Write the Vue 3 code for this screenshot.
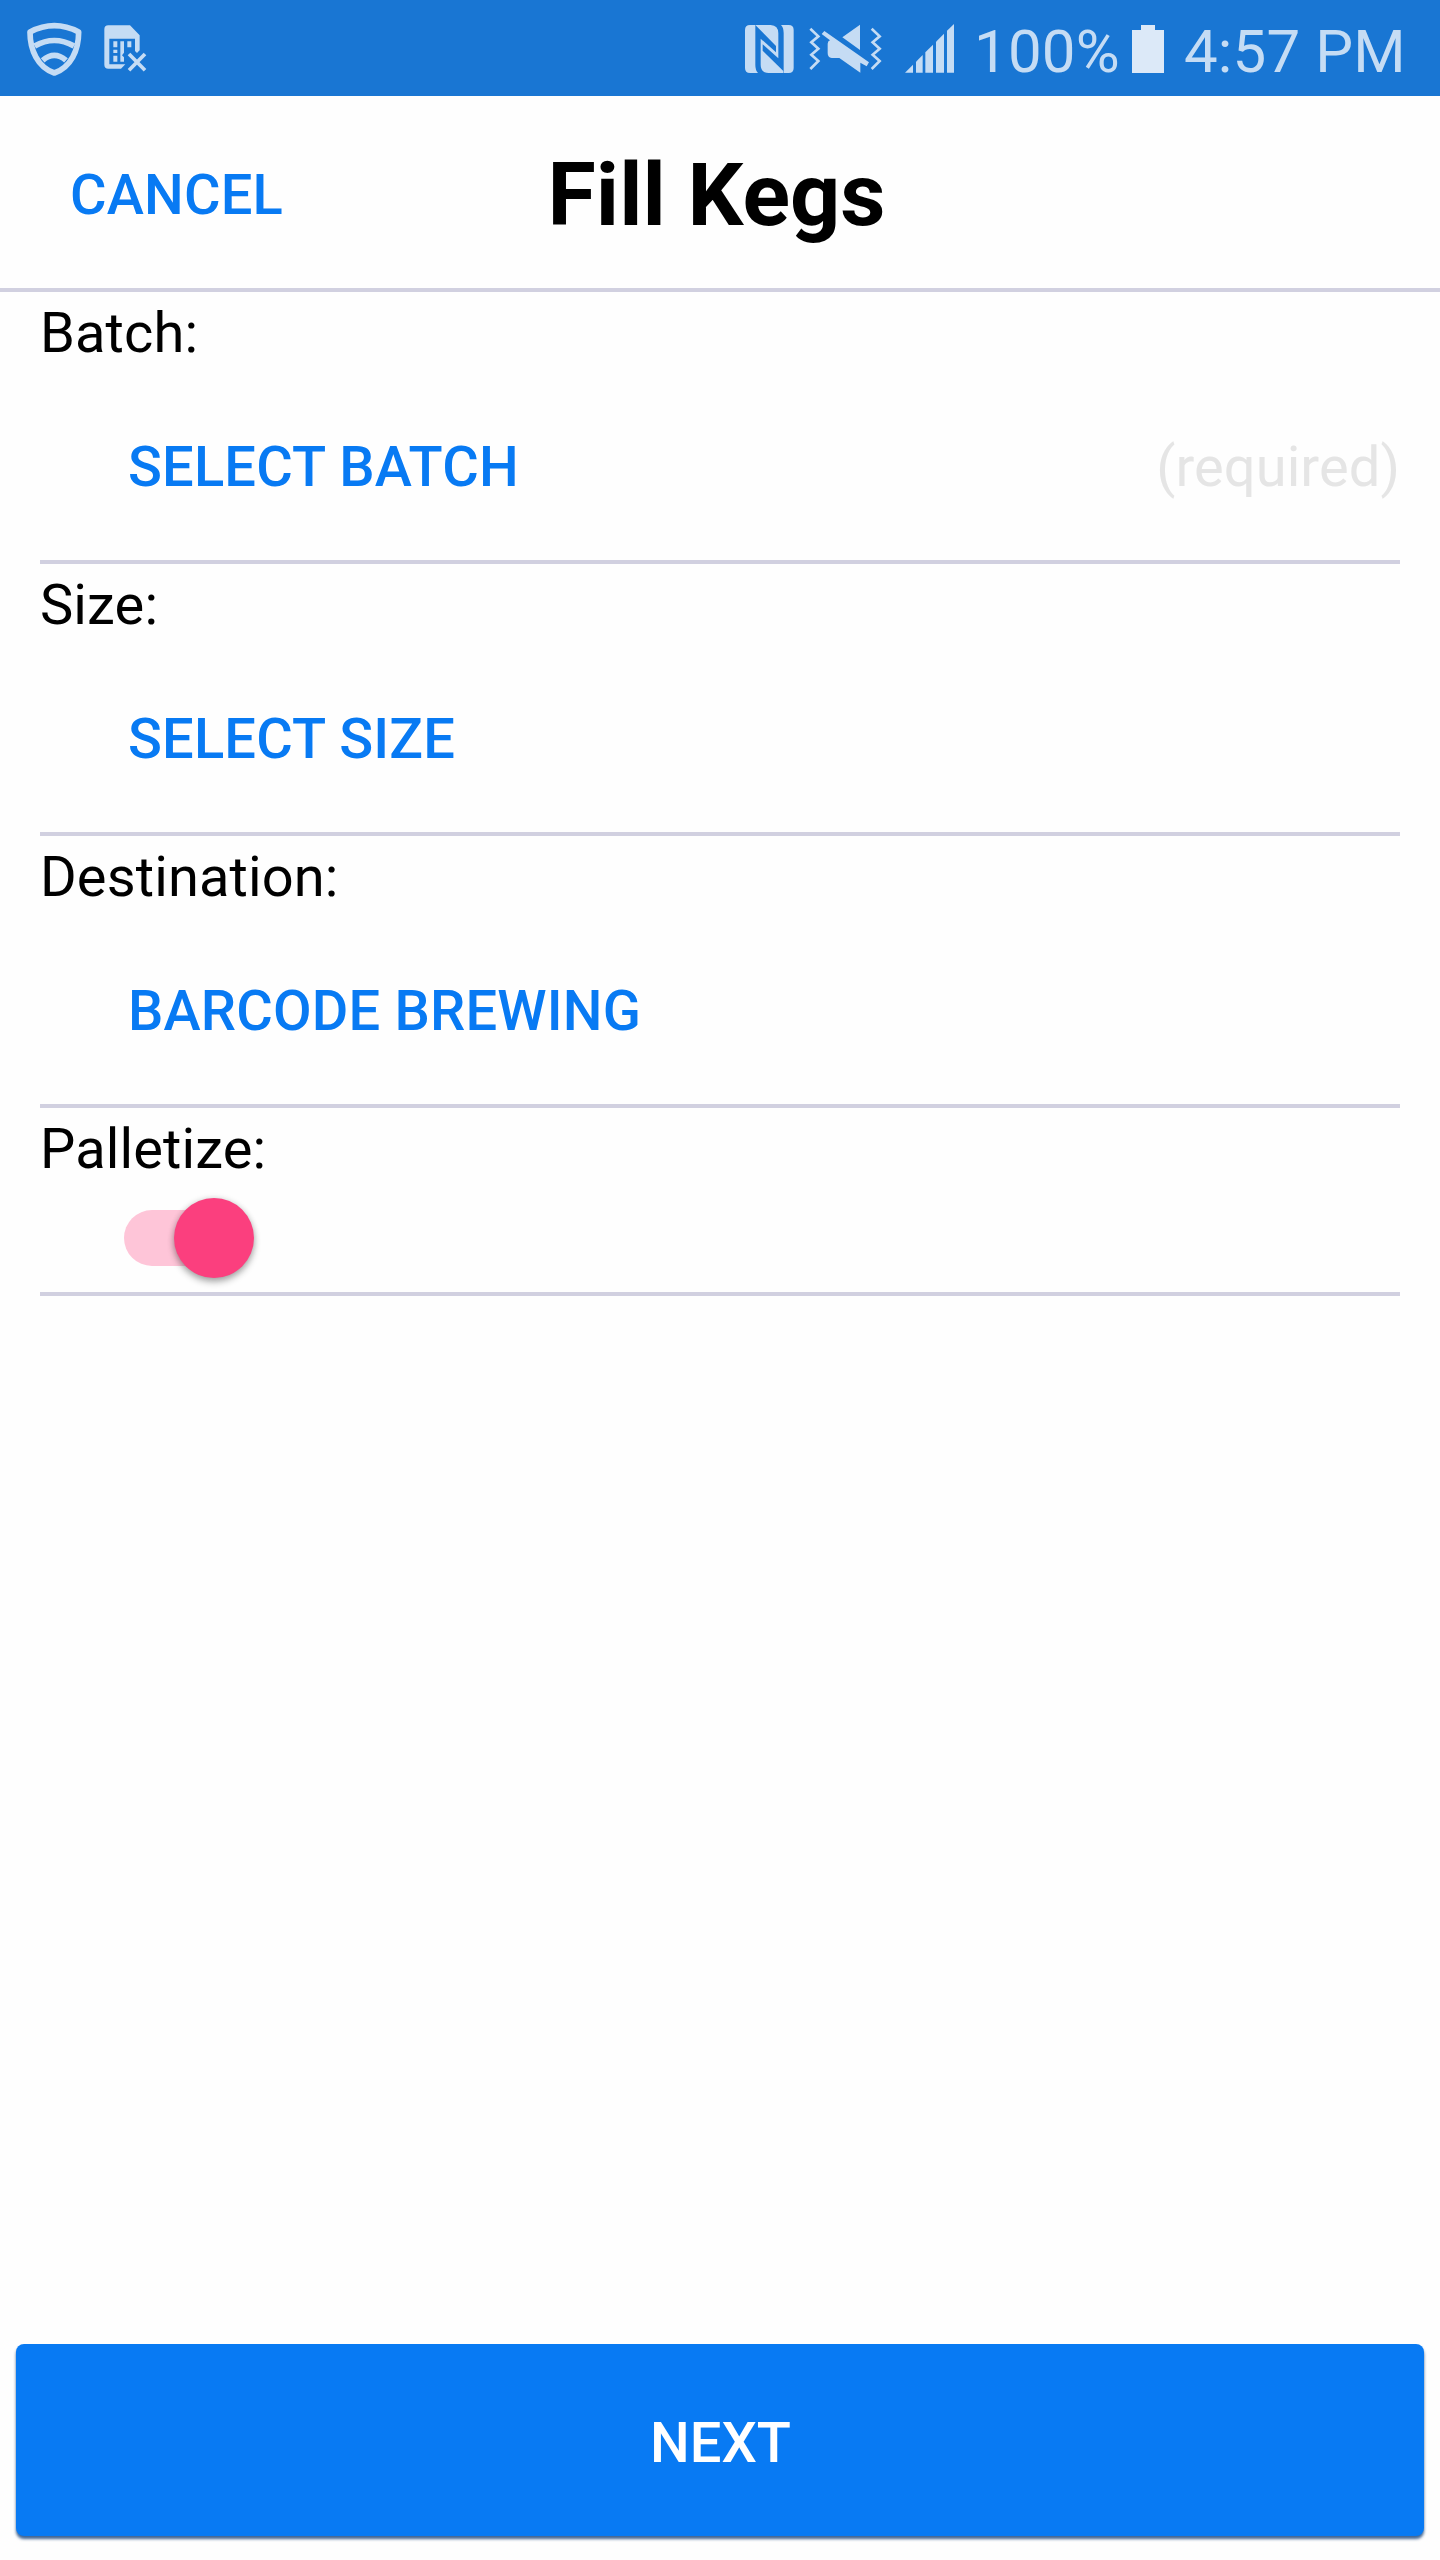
<script setup>
const fields = [
  { label: 'Batch:', action: 'SELECT BATCH', hint: '(required)' },
  { label: 'Size:', action: 'SELECT SIZE' },
  { label: 'Destination:', action: 'BARCODE BREWING' },
]
const bars = [
  'M525 219 L549 195 V219Z',
  'M558 186 L578 166 V219 H558Z',
  'M586 158 L609 135 V219 H586Z',
  'M618 126 L642 102 V219 H618Z',
  'M651 93 L672 73 V219 H651Z',
]
</script>

<template>
  <div class="screen">
    <div class="status">
      <svg class="shield" width="55" height="54" viewBox="80 66 165 162" fill="none" stroke="currentColor" stroke-width="17">
        <path d="M89 96 Q162 58 235 96 C235 150 212 202 162 219 C112 202 89 150 89 96Z" stroke-linejoin="round" />
        <path d="M103 138 Q162 105 221 138" />
        <path d="M127 181 Q162 151 197 181" />
      </svg>
      <svg class="sim" width="43" height="47" viewBox="311 76 129 141" fill="currentColor">
        <path d="M324 77H389L418 107V152L410 160L404 154V117H327V194H375L362 207H324Q312 207 312 195V89Q312 77 324 77Z" />
        <path d="M339 125h12v18h-12zM339 150h12v10h-12zM339 168h12v18h-12zM381 125h12v18h-12zM360 125h11v34l-6 8 6 6v13h-11z" />
        <path d="M386 163L434 212M434 163L386 212" stroke="currentColor" stroke-width="11" />
      </svg>
      <div class="gap"></div>
      <svg class="nfc" width="49" height="48" viewBox="45 75 147 144" fill="currentColor">
        <path d="M60 75H76V195Q76 211 84 219H60Q45 219 45 204V90Q45 75 60 75Z" />
        <path d="M76 75H122Q145 76 145 100V175L98 133V152L160 213V219H116Q92 218 92 194V116L138 157V138Z" />
        <path d="M153 75H176Q191 75 191 90V204Q191 219 176 219H161V99Q161 83 153 75Z" />
      </svg>
      <svg class="mute" width="73" height="49" viewBox="236 73 219 147" fill="currentColor">
        <path d="M240 87L264 110L243 128L264 147L243 165L264 184L240 208M424 87L448 110L427 128L448 147L427 165L448 184L424 208" fill="none" stroke="currentColor" stroke-width="8" />
        <path d="M389 75V151L336 113ZM282 94L416 188L409 200L390 189V219L327 175H304Q292 174 292 160V132Q292 124 299 122L274 103Z" />
      </svg>
      <svg class="signal" width="49" height="49" viewBox="525 73 147 147" fill="currentColor">
        <path v-for="d in bars" :key="d" :d="d" />
      </svg>
      <span class="percent">100%</span>
      <svg class="battery" width="32" height="48" viewBox="0 0 32 48" fill="currentColor">
        <path d="M9 0H23V5H32V48H0V5H9Z" />
      </svg>
      <span class="time">4:57 PM</span>
    </div>

    <header class="header">
      <button class="link cancel">CANCEL</button>
      <h1>Fill Kegs</h1>
      <div class="side"></div>
    </header>

    <main class="form">
      <section v-for="f in fields" :key="f.label" class="field">
        <div class="label">{{ f.label }}</div>
        <div class="row">
          <button class="link">{{ f.action }}</button>
          <span v-if="f.hint" class="hint">{{ f.hint }}</span>
        </div>
      </section>
      <section class="field">
        <div class="label">Palletize:</div>
        <div class="row switch-row">
          <div class="track"><div class="thumb"></div></div>
        </div>
      </section>
    </main>

    <button class="next">NEXT</button>
  </div>
</template>

<style>
body {
  margin: 0;
}
</style>

<style scoped>
.screen {
  width: 1440px;
  height: 2560px;
  display: flex;
  flex-direction: column;
  background: #fefefe;
  color: #000;
  font-family: Roboto, sans-serif;
  font-size: 56px;
  overflow: hidden;
}
button {
  border: 0;
  padding: 0;
  background: none;
  font: inherit;
  font-weight: 500;
}
.status {
  height: 96px;
  flex: none;
  box-sizing: border-box;
  display: flex;
  align-items: flex-start;
  padding: 22px 36px 0 27px;
  background: #1976d3;
  color: #c5dcf4;
  font-size: 60px;
  line-height: 60px;
}
.status svg {
  flex: none;
}
.sim {
  margin: 3px 0 0 22px;
}
.gap {
  flex: 1;
}
.nfc {
  margin-top: 3px;
}
.mute {
  margin: 2px 0 0 15px;
}
.signal {
  margin: 2px 0 0 23px;
}
.percent {
  width: 146px;
  margin-left: 20px;
  letter-spacing: 0.2px;
  white-space: nowrap;
}
.battery {
  margin: 3px 0 0 12px;
  color: #dce9f8;
}
.time {
  width: 220px;
  margin-left: 20px;
  letter-spacing: 0.15px;
  white-space: nowrap;
}
.header {
  height: 196px;
  flex: none;
  box-sizing: border-box;
  display: flex;
  align-items: center;
  padding: 6px 0 0;
  border-bottom: 4px solid #d1d0e0;
}
.link {
  color: #087af3;
  letter-spacing: 0.18px;
  white-space: nowrap;
}
.cancel {
  width: 353px;
  flex: none;
  box-sizing: border-box;
  padding-left: 70px;
  text-align: left;
}
h1 {
  flex: 1;
  margin: 0;
  font-size: 88px;
  font-weight: 700;
  line-height: 104px;
  text-align: center;
}
.side {
  width: 360px;
}
.form {
  flex: 1;
  padding: 0 40px;
}
.field {
  border-bottom: 4px solid #d1d0e0;
}
.label {
  letter-spacing: 0.12px;
  line-height: 82px;
}
.row {
  height: 186px;
  display: flex;
  align-items: center;
  justify-content: space-between;
  padding-left: 88px;
}
.hint {
  color: #e5e5e5;
  letter-spacing: 0.1px;
}
.switch-row {
  height: 102px;
  box-sizing: border-box;
  align-items: flex-start;
  justify-content: flex-start;
  padding: 20px 0 0 84px;
}
.track {
  width: 120px;
  height: 56px;
  display: flex;
  align-items: center;
  border-radius: 28px;
  background: #fec5d8;
}
.thumb {
  width: 80px;
  height: 80px;
  flex: none;
  margin-left: 50px;
  border-radius: 50%;
  background: #fb3f7e;
  box-shadow: 0 4px 7px rgba(0, 0, 0, 0.32), 0 0 6px rgba(0, 0, 0, 0.12);
}
.next {
  height: 192px;
  flex: none;
  margin: 0 16px 24px;
  padding: 6px 0 0 1px;
  border-radius: 8px;
  background: #087af3;
  color: #fff;
  box-shadow: 0 3px 3px rgba(0, 50, 110, 0.75);
}
</style>
